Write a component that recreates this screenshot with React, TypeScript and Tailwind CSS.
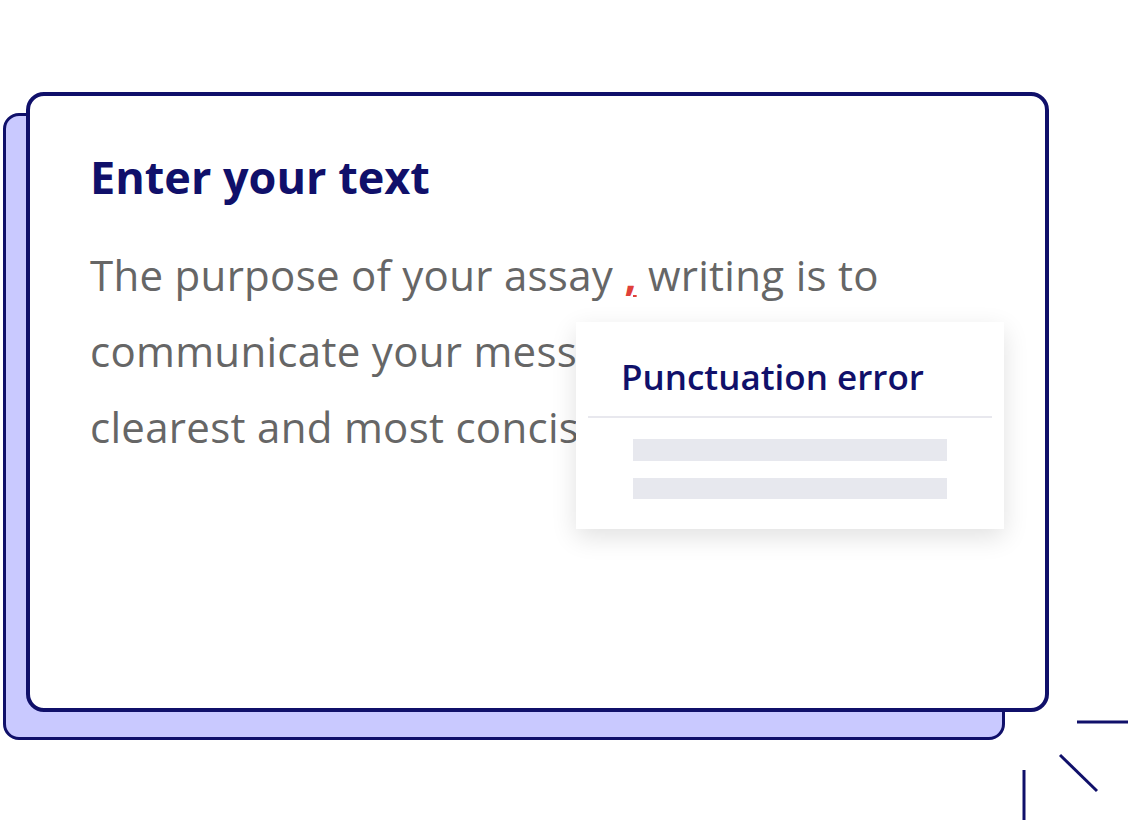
import React from "react";

const font = { fontFamily: '"Open Sans", "Noto Sans", sans-serif' };

function Popup() {
  return (
    <div className="absolute left-[546px] top-[226px] w-[428px] h-[207px] bg-white shadow-[0_8px_24px_rgba(0,0,0,0.12)]">
      <div className="px-[45px] pt-[37px] pb-[22px]">
        <p className="text-[35px] leading-none font-semibold text-[#10106a]">
          Punctuation error
        </p>
      </div>
      <div className="mx-[12px] h-[2px] bg-[#e8e8ee]" />
      <div className="px-[57px] pt-[21px] flex flex-col gap-[17px]">
        <div className="h-[22px] bg-[#e7e8ee]" />
        <div className="h-[21px] bg-[#e7e8ee]" />
      </div>
    </div>
  );
}

function Sparks() {
  return (
    <svg
      className="absolute left-[1010px] top-[712px]"
      width="118"
      height="109"
      viewBox="0 0 118 109"
      fill="none"
      stroke="#10106a"
      strokeWidth="3"
    >
      <line x1="67" y1="10" x2="118" y2="10" />
      <line x1="50" y1="43" x2="87" y2="79" />
      <line x1="14" y1="58" x2="14" y2="108" />
    </svg>
  );
}

export default function App() {
  return (
    <div className="relative w-[1128px] h-[821px] bg-white overflow-hidden" style={font}>
      <div className="relative ml-[26px] mt-[92px] w-[1023px] h-[620px]">
        <div className="absolute left-[-23px] top-[21px] right-[44px] bottom-[-28px] rounded-[16px] border-[3px] border-[#10106a] bg-[#c9c9ff]" />
        <div className="relative h-full rounded-[18px] border-[4px] border-[#10106a] bg-white px-[60px] pt-[58px]">
          <h1 className="text-[45px] leading-none font-bold text-[#10106a]">
            Enter your text
          </h1>
          <div className="mt-[38px] text-[42px] leading-[76px] text-[#666666] tracking-[0.3px]">
            <p>
              The purpose of your assay{" "}
              <span className="font-bold text-[#e0403a] underline decoration-[#e0403a] decoration-[2px] underline-offset-[4px]">,</span>{" "}
              writing is to
            </p>
            <p>communicate your message in the</p>
            <p>clearest and most concise way.</p>
          </div>
          <Popup />
        </div>
      </div>
      <Sparks />
    </div>
  );
}
